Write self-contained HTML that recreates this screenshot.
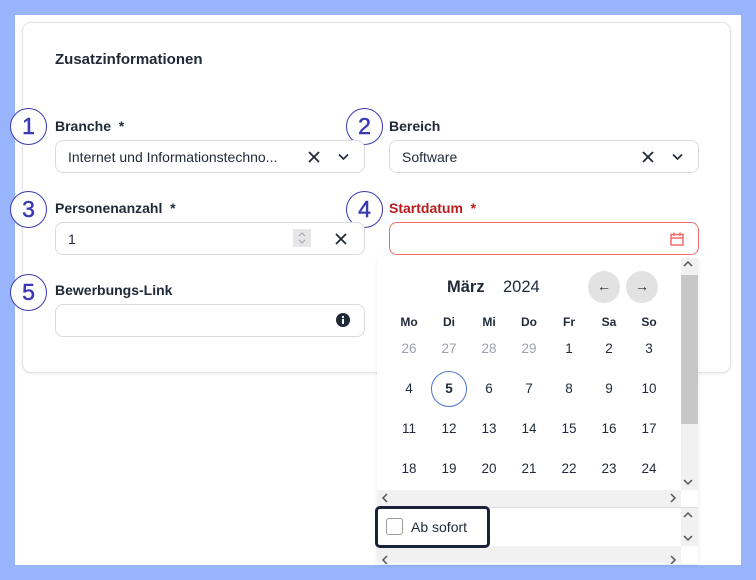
<!DOCTYPE html>
<html><head><meta charset="utf-8"><style>
*{box-sizing:border-box;margin:0;padding:0}
body{width:756px;height:580px;background:#98b5fb;font-family:"Liberation Sans",sans-serif;color:#1f2937;position:relative;overflow:hidden}
.a{position:absolute}
.page{left:15px;top:15px;width:726px;height:550px;background:#fff}
.card{left:22px;top:22px;width:709px;height:351px;border:1px solid #e3e3e6;border-radius:9px;box-shadow:0 1px 3px rgba(0,0,0,.08);background:#fff}
.lbl{font-size:14px;font-weight:bold;color:#1f2937}
.inp{height:33px;border:1px solid #d9dbe0;border-radius:8px;background:#fff;font-size:14px;color:#1f2937}
.num{width:37px;height:37px;border:1.5px solid #3a39b5;border-radius:50%;color:#3a39b5;font-size:23px;text-align:center;line-height:34px;background:#fff;-webkit-text-stroke:0.5px #3a39b5}
.cell{width:40px;text-align:center;font-size:13.5px}
</style></head><body>
<div class="a page"></div>
<div class="a card"></div>
<div class="a" style="left:55px;top:51px;font-size:15px;font-weight:bold;color:#1f2937">Zusatzinformationen</div>

<div class="a num" style="left:10px;top:108px">1</div>
<div class="a num" style="left:346px;top:108px">2</div>
<div class="a num" style="left:10px;top:191px">3</div>
<div class="a num" style="left:346px;top:191px">4</div>
<div class="a num" style="left:10px;top:274px">5</div>

<div class="a lbl" style="left:55px;top:118px">Branche&nbsp; *</div>
<div class="a inp" style="left:55px;top:140px;width:310px"><span class="a" style="left:12px;top:8px">Internet und Informationstechno...</span>
<svg class="a" style="left:252px;top:10px" width="12" height="12"><path d="M1 1L11 11M11 1L1 11" stroke="#1f2937" stroke-width="1.8"/></svg>
<svg class="a" style="left:282px;top:12px" width="11" height="8"><path d="M1 1.5L5.5 6L10 1.5" stroke="#1f2937" stroke-width="1.6" fill="none"/></svg></div>

<div class="a lbl" style="left:389px;top:118px">Bereich</div>
<div class="a inp" style="left:389px;top:140px;width:310px"><span class="a" style="left:12px;top:8px">Software</span>
<svg class="a" style="left:252px;top:10px" width="12" height="12"><path d="M1 1L11 11M11 1L1 11" stroke="#1f2937" stroke-width="1.8"/></svg>
<svg class="a" style="left:282px;top:12px" width="11" height="8"><path d="M1 1.5L5.5 6L10 1.5" stroke="#1f2937" stroke-width="1.6" fill="none"/></svg></div>

<div class="a lbl" style="left:55px;top:200px">Personenanzahl&nbsp; *</div>
<div class="a inp" style="left:55px;top:222px;width:310px"><span class="a" style="left:12px;top:8px">1</span>
<div class="a" style="left:237px;top:6px;width:18px;height:18px;background:#e6e6e9"></div>
<svg class="a" style="left:240px;top:8px" width="12" height="14"><path d="M3 5L6 2L9 5M3 9L6 12L9 9" stroke="#a0a3aa" stroke-width="1" fill="none"/></svg>
<svg class="a" style="left:279px;top:10px" width="12" height="12"><path d="M1 1L11 11M11 1L1 11" stroke="#1f2937" stroke-width="1.8"/></svg></div>

<div class="a lbl" style="left:389px;top:200px;color:#b91c1c">Startdatum&nbsp; *</div>
<div class="a inp" style="left:389px;top:222px;width:310px;border-color:#f26b6b"><svg class="a" style="left:280px;top:9px" width="14" height="14"><rect x="1" y="2.5" width="12" height="10.5" fill="none" stroke="#f26b6b" stroke-width="1.5"/><path d="M1 6H13M4 0.5V4M10 0.5V4" stroke="#f26b6b" stroke-width="1.5"/></svg></div>

<div class="a lbl" style="left:55px;top:282px">Bewerbungs-Link</div>
<div class="a inp" style="left:55px;top:304px;width:310px"><svg class="a" style="left:280px;top:8px" width="14" height="14"><circle cx="7" cy="7" r="7" fill="#1f2937"/><rect x="6" y="6" width="2" height="5" fill="#fff"/><circle cx="7" cy="4" r="1.1" fill="#fff"/></svg></div>

<div class="a" style="left:377px;top:258px;width:321px;height:306px;background:#fff;box-shadow:0 2px 4px rgba(0,0,0,.08)"></div>
<div class="a" style="left:681px;top:258px;width:17px;height:232px;background:#f1f1f1"></div>
<div class="a" style="left:681px;top:275px;width:17px;height:149px;background:#c6c6c6"></div>
<div class="a" style="left:377px;top:490px;width:304px;height:17px;background:#f1f1f1"></div>
<div class="a" style="left:681px;top:490px;width:17px;height:17px;background:#fff"></div>
<div class="a" style="left:377px;top:507px;width:321px;height:1px;background:#ddd"></div>
<div class="a" style="left:681px;top:508px;width:17px;height:38px;background:#f1f1f1"></div>
<div class="a" style="left:377px;top:546px;width:304px;height:17px;background:#f1f1f1"></div>
<svg class="a" style="left:377px;top:258px" width="321" height="306" fill="none" stroke="#555" stroke-width="1.5">
<path d="M307 8L311 4L315 8"/><path d="M307 222L311 226L315 222"/>
<path d="M10 236L6 240L10 244"/><path d="M294 236L298 240L294 244"/>
<path d="M307 259L311 255L315 259"/><path d="M307 278L311 282L315 278"/>
<path d="M10 298L6 302L10 306"/><path d="M294 298L298 302L294 306"/>
</svg>

<div class="a" style="left:447px;top:278px;font-size:16.5px;font-weight:bold;color:#1f2937">März</div>
<div class="a" style="left:503px;top:278px;font-size:16.5px;color:#1f2937">2024</div>
<div class="a" style="left:588px;top:271px;width:32px;height:32px;border-radius:50%;background:#e2e2e2;text-align:center;line-height:31px;font-size:14px">←</div>
<div class="a" style="left:626px;top:271px;width:32px;height:32px;border-radius:50%;background:#e2e2e2;text-align:center;line-height:31px;font-size:14px">→</div>

<div class="a" style="left:389px;top:315px;display:flex;font-weight:bold">
<div class="cell" style="font-size:12px">Mo</div><div class="cell" style="font-size:12px">Di</div><div class="cell" style="font-size:12px">Mi</div><div class="cell" style="font-size:12px">Do</div><div class="cell" style="font-size:12px">Fr</div><div class="cell" style="font-size:12px">Sa</div><div class="cell" style="font-size:12px">So</div></div>
<div class="a" style="left:389px;top:341px;display:flex;color:#9ca3af"><div class="cell">26</div><div class="cell">27</div><div class="cell">28</div><div class="cell">29</div><div class="cell" style="color:#1f2937">1</div><div class="cell" style="color:#1f2937">2</div><div class="cell" style="color:#1f2937">3</div></div>
<div class="a" style="left:431px;top:371px;width:36px;height:36px;border:1px solid #4a72d6;border-radius:50%"></div>
<div class="a" style="left:389px;top:381px;display:flex"><div class="cell">4</div><div class="cell" style="font-weight:bold">5</div><div class="cell">6</div><div class="cell">7</div><div class="cell">8</div><div class="cell">9</div><div class="cell">10</div></div>
<div class="a" style="left:389px;top:421px;display:flex"><div class="cell">11</div><div class="cell">12</div><div class="cell">13</div><div class="cell">14</div><div class="cell">15</div><div class="cell">16</div><div class="cell">17</div></div>
<div class="a" style="left:389px;top:461px;display:flex"><div class="cell">18</div><div class="cell">19</div><div class="cell">20</div><div class="cell">21</div><div class="cell">22</div><div class="cell">23</div><div class="cell">24</div></div>

<div class="a" style="left:375px;top:506px;width:115px;height:42px;border:3px solid #1a2238;border-radius:5px;background:#fff"></div>
<div class="a" style="left:386px;top:518px;width:17px;height:17px;border:1.5px solid #9a9a9a;border-radius:3px"></div>
<div class="a" style="left:411px;top:519px;font-size:14px;color:#1f2937">Ab sofort</div>
</body></html>
